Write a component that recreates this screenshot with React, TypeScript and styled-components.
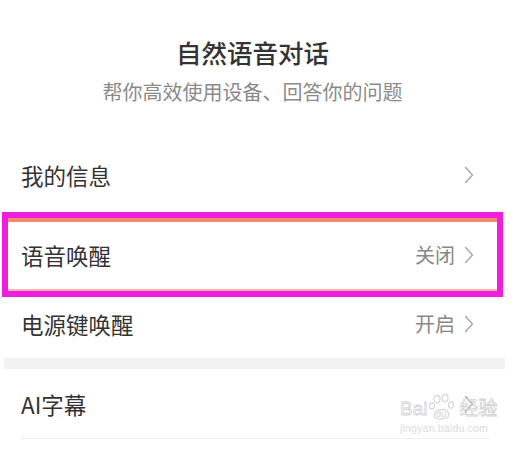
import styled, { createGlobalStyle } from "styled-components";

const GlobalStyle = createGlobalStyle`
  html, body {
    margin: 0;
    padding: 0;
    background: #fff;
  }
  body {
    font-family: "Noto Sans CJK SC", "Noto Sans", sans-serif;
    color: #333;
  }
`;

type Item = { label: string; value?: string };

const WAKE: Item[] = [
  { label: "语音唤醒", value: "关闭" },
  { label: "电源键唤醒", value: "开启" },
];

const Chevron = () => (
  <svg width="10" height="18" viewBox="0 0 10 18">
    <polyline
      points="1.5,1.5 8.5,9 1.5,16.5"
      fill="none"
      stroke="#a8a8a8"
      strokeWidth="1.4"
      strokeLinejoin="round"
      strokeLinecap="round"
    />
  </svg>
);

const App = () => {
  return (
    <>
      <GlobalStyle />
      <Page>
        <Header>
          <Title>自然语音对话</Title>
          <Subtitle>帮你高效使用设备、回答你的问题</Subtitle>
        </Header>
        <Group>
          <Row>
            <Label>我的信息</Label>
            <Right>
              <Chevron />
            </Right>
          </Row>
        </Group>
        <Gap $tone="white" />
        <Group>
          {WAKE.map((item) => (
            <Row key={item.label}>
              <Label>{item.label}</Label>
              <Right>
                {item.value && <Value>{item.value}</Value>}
                <Chevron />
              </Right>
            </Row>
          ))}
        </Group>
        <Gap $tone="gray" />
        <Group>
          <Row>
            <Label>AI字幕</Label>
            <Right>
              <Chevron />
            </Right>
          </Row>
          <Divider />
        </Group>
        <Highlight />
        <Watermark>
          <MarkTop>
            <MarkWord>Bai</MarkWord>
            <Paw>
              <svg width="30" height="26" viewBox="0 0 30 26">
                <g fill="none" stroke="#d6d6d6" strokeWidth="1.2">
                  <ellipse cx="9" cy="5" rx="3" ry="3.6" />
                  <ellipse cx="17" cy="4" rx="3" ry="3.6" />
                  <ellipse cx="4" cy="12" rx="2.6" ry="3.2" />
                  <ellipse cx="23" cy="11" rx="2.6" ry="3.2" />
                  <path d="M6 22 C6 14 21 13 21 21 C21 26 6 26 6 22 Z" />
                </g>
                <text x="8" y="23" fontSize="9" fill="#cfcfcf" fontFamily="Liberation Sans, sans-serif">
                  du
                </text>
              </svg>
            </Paw>
            <MarkWord>经验</MarkWord>
          </MarkTop>
          <MarkUrl>jingyan.baidu.com</MarkUrl>
        </Watermark>
      </Page>
    </>
  );
};

const Page = styled.div`
  position: relative;
  width: 505px;
  height: 455px;
  overflow: hidden;
  background: #fff;
`;

const Header = styled.div`
  display: flex;
  flex-direction: column;
  align-items: center;
  padding: 36px 0 0;
  height: 140px;
  box-sizing: border-box;
`;

const Title = styled.h1`
  margin: 0;
  font-size: 25.5px;
  line-height: 32px;
  font-weight: 500;
  color: #333;
`;

const Subtitle = styled.p`
  margin: 11px 0 0;
  font-size: 20px;
  line-height: 26px;
  color: #8a8a8a;
`;

const Group = styled.div`
  display: flex;
  flex-direction: column;
`;

const Row = styled.div`
  display: flex;
  align-items: center;
  justify-content: space-between;
  height: 69px;
  padding: 0 31px 0 21px;
`;

const Label = styled.span`
  font-size: 22.5px;
  color: #333;
`;

const Right = styled.div`
  display: flex;
  align-items: center;
  gap: 9px;
`;

const Value = styled.span`
  font-size: 20px;
  color: #888;
`;

const Gap = styled.div<{ $tone: "white" | "gray" }>`
  height: 11px;
  margin-left: 4px;
  background: ${(p) => (p.$tone === "gray" ? "#f2f2f2" : "#fff")};
`;

const Divider = styled.div`
  height: 1px;
  margin: 0 15px 0 20px;
  background: #eeeeee;
`;

const Highlight = styled.div`
  position: absolute;
  left: 2px;
  top: 212px;
  width: 501px;
  height: 85px;
  box-sizing: border-box;
  border: 6px solid #ee1ee0;
  box-shadow: inset 0 4px 0 #f4866c, inset 0 -2px 0 #f6b3a2;
  pointer-events: none;
`;

const Watermark = styled.div`
  position: absolute;
  left: 400px;
  top: 394px;
  display: flex;
  flex-direction: column;
  align-items: flex-start;
`;

const MarkTop = styled.div`
  display: flex;
  align-items: flex-end;
`;

const MarkWord = styled.span`
  font-family: "Liberation Sans", "Noto Sans CJK SC", sans-serif;
  font-size: 19px;
  line-height: 22px;
  color: transparent;
  -webkit-text-stroke: 0.8px #d4d4d4;
`;

const Paw = styled.span`
  display: flex;
  margin: 0 1px;
`;

const MarkUrl = styled.span`
  margin-top: 2px;
  font-family: "Liberation Sans", sans-serif;
  font-size: 10.5px;
  color: #dcdcdc;
  letter-spacing: 0.2px;
`;

export default App;
